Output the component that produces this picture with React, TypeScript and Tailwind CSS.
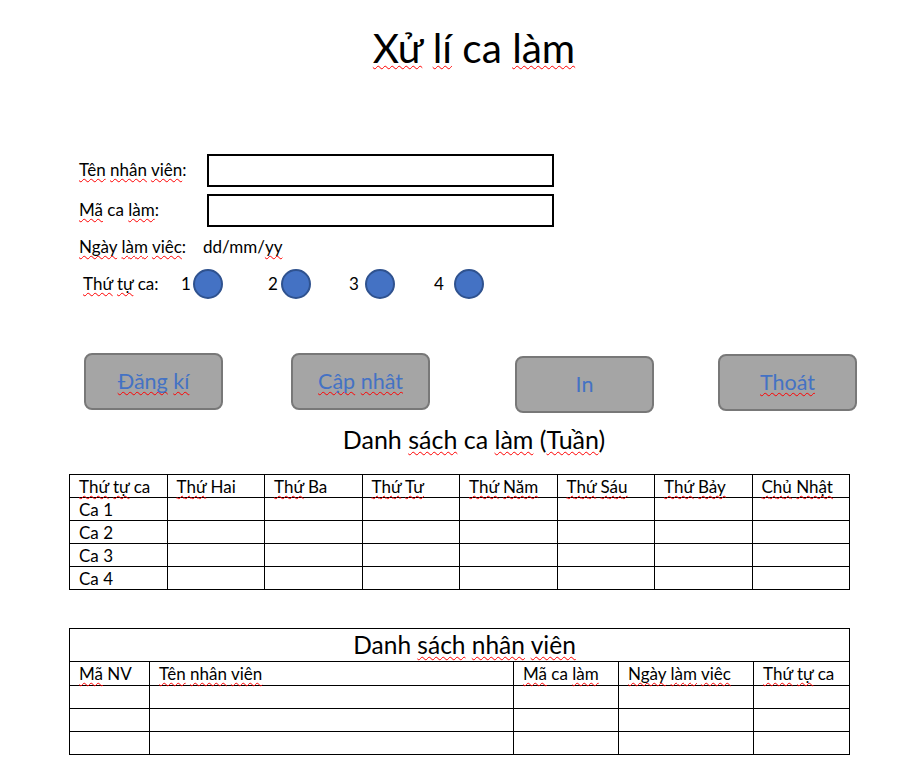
import React from "react";

const W = ({ children }: { children: React.ReactNode }) => (
  <span className="underline decoration-wavy decoration-[#ff0000] decoration-1 underline-offset-[2px] [text-decoration-skip-ink:none]">
    {children}
  </span>
);

const Circle = () => (
  <div className="w-[30px] h-[30px] rounded-full bg-[#4472c4] border-2 border-[#2f528f]" />
);

const Btn = ({ children, mt }: { children: React.ReactNode; mt: string }) => (
  <div
    className={`w-[139px] h-[57px] rounded-[8px] bg-[#a5a5a5] border-2 border-[#787878] flex items-center justify-center text-[21.5px] text-[#4472c4] ${mt}`}
  >
    {children}
  </div>
);

const cols1 = [
  <><W>Thứ</W> <W>tự</W> ca</>,
  <><W>Thứ</W> Hai</>,
  <><W>Thứ</W> Ba</>,
  <><W>Thứ</W> <W>Tư</W></>,
  <><W>Thứ</W> <W>Năm</W></>,
  <><W>Thứ</W> <W>Sáu</W></>,
  <><W>Thứ</W> <W>Bảy</W></>,
  <><W>Chủ</W> <W>Nhật</W></>,
];

export default function App() {
  return (
    <div
      className="w-[915px] h-[775px] bg-white text-black relative overflow-hidden"
      style={{ fontFamily: "Lato, 'Open Sans', sans-serif" }}
    >
      {/* Title */}
      <div className="pt-[24px] flex justify-center pl-[33px]">
        <div className="text-[40.5px] leading-[48px]">
          <W>Xử</W> <W>lí</W> ca <W>làm</W>
        </div>
      </div>

      {/* Form */}
      <div className="mt-[82px] text-[17px]">
        <div className="flex items-center h-[32px]">
          <div className="ml-[79px] w-[128px]">
            <W>Tên</W> <W>nhân</W> <W>viên</W>:
          </div>
          <div className="w-[347px] h-[33px] border-2 border-black" />
        </div>
        <div className="flex items-center h-[32px] mt-[8px]">
          <div className="ml-[79px] w-[128px]">
            <W>Mã</W> ca <W>làm</W>:
          </div>
          <div className="w-[347px] h-[33px] border-2 border-black" />
        </div>
        <div className="flex items-center h-[24px] mt-[9px]">
          <div className="ml-[79px] w-[124px]">
            <W>Ngày</W> <W>làm</W> <W>viêc</W>:
          </div>
          <div>
            dd/mm/<W>yy</W>
          </div>
        </div>
        <div className="flex items-center h-[30px] mt-[10px]">
          <div className="ml-[83px] w-[98px]">
            <W>Thứ</W> <W>tự</W> ca:
          </div>
          <div className="w-[12px]">1</div>
          <Circle />
          <div className="ml-[45px] w-[13px]">2</div>
          <Circle />
          <div className="ml-[38px] w-[16px]">3</div>
          <Circle />
          <div className="ml-[39px] w-[20px]">4</div>
          <Circle />
        </div>
      </div>

      {/* Buttons */}
      <div className="flex items-start mt-[54px] h-[58px]">
        <div className="ml-[84px]">
          <Btn mt="mt-0">
            <W>Đăng</W>&nbsp;<W>kí</W>
          </Btn>
        </div>
        <div className="ml-[68px]">
          <Btn mt="mt-0">
            <W>Cập</W>&nbsp;<W>nhât</W>
          </Btn>
        </div>
        <div className="ml-[85px]">
          <Btn mt="mt-[3px]">In</Btn>
        </div>
        <div className="ml-[64px]">
          <Btn mt="mt-[1px]">
            <W>Thoát</W>
          </Btn>
        </div>
      </div>

      {/* Weekly list */}
      <div className="mt-[12px] flex justify-center pl-[33px] text-[25px] leading-[32px]">
        <div>
          Danh <W>sách</W> ca <W>làm</W> (<W>Tuần</W>)
        </div>
      </div>

      <table className="ml-[69px] mt-[19px] border-collapse text-[17px] leading-[21px] table-fixed w-[780px]">
        <tbody>
          <tr className="h-[23px]">
            {cols1.map((c, i) => (
              <td key={i} className="border border-black pl-[9px] p-0 align-middle w-[97.5px] whitespace-nowrap">
                {c}
              </td>
            ))}
          </tr>
          {["Ca 1", "Ca 2", "Ca 3", "Ca 4"].map((r) => (
            <tr key={r} className="h-[23px]">
              <td className="border border-black pl-[9px] p-0 align-middle">{r}</td>
              {[0, 1, 2, 3, 4, 5, 6].map((j) => (
                <td key={j} className="border border-black p-0" />
              ))}
            </tr>
          ))}
        </tbody>
      </table>

      {/* Employee list */}
      <table className="ml-[69px] mt-[38px] border-collapse text-[17px] leading-[21px] table-fixed w-[780px]">
        <colgroup>
          <col className="w-[80px]" />
          <col className="w-[364px]" />
          <col className="w-[105px]" />
          <col className="w-[135px]" />
          <col className="w-[96px]" />
        </colgroup>
        <tbody>
          <tr className="h-[33px]">
            <td colSpan={5} className="border border-black p-0 text-center text-[24.5px] leading-[30px]">
              <span className="relative left-[5px]">
                Danh <W>sách</W> <W>nhân</W> <W>viên</W>
              </span>
            </td>
          </tr>
          <tr className="h-[24px]">
            <td className="border border-black pl-[9px] p-0 whitespace-nowrap">
              <W>Mã</W> NV
            </td>
            <td className="border border-black pl-[9px] p-0 whitespace-nowrap">
              <W>Tên</W> <W>nhân</W> <W>viên</W>
            </td>
            <td className="border border-black pl-[9px] p-0 whitespace-nowrap">
              <W>Mã</W> ca <W>làm</W>
            </td>
            <td className="border border-black pl-[9px] p-0 whitespace-nowrap">
              <W>Ngày</W> <W>làm</W> <W>viêc</W>
            </td>
            <td className="border border-black pl-[9px] p-0 whitespace-nowrap">
              <W>Thứ</W> <W>tự</W> ca
            </td>
          </tr>
          {[0, 1, 2].map((r) => (
            <tr key={r} className="h-[23px]">
              {[0, 1, 2, 3, 4].map((j) => (
                <td key={j} className="border border-black p-0" />
              ))}
            </tr>
          ))}
        </tbody>
      </table>
    </div>
  );
}
